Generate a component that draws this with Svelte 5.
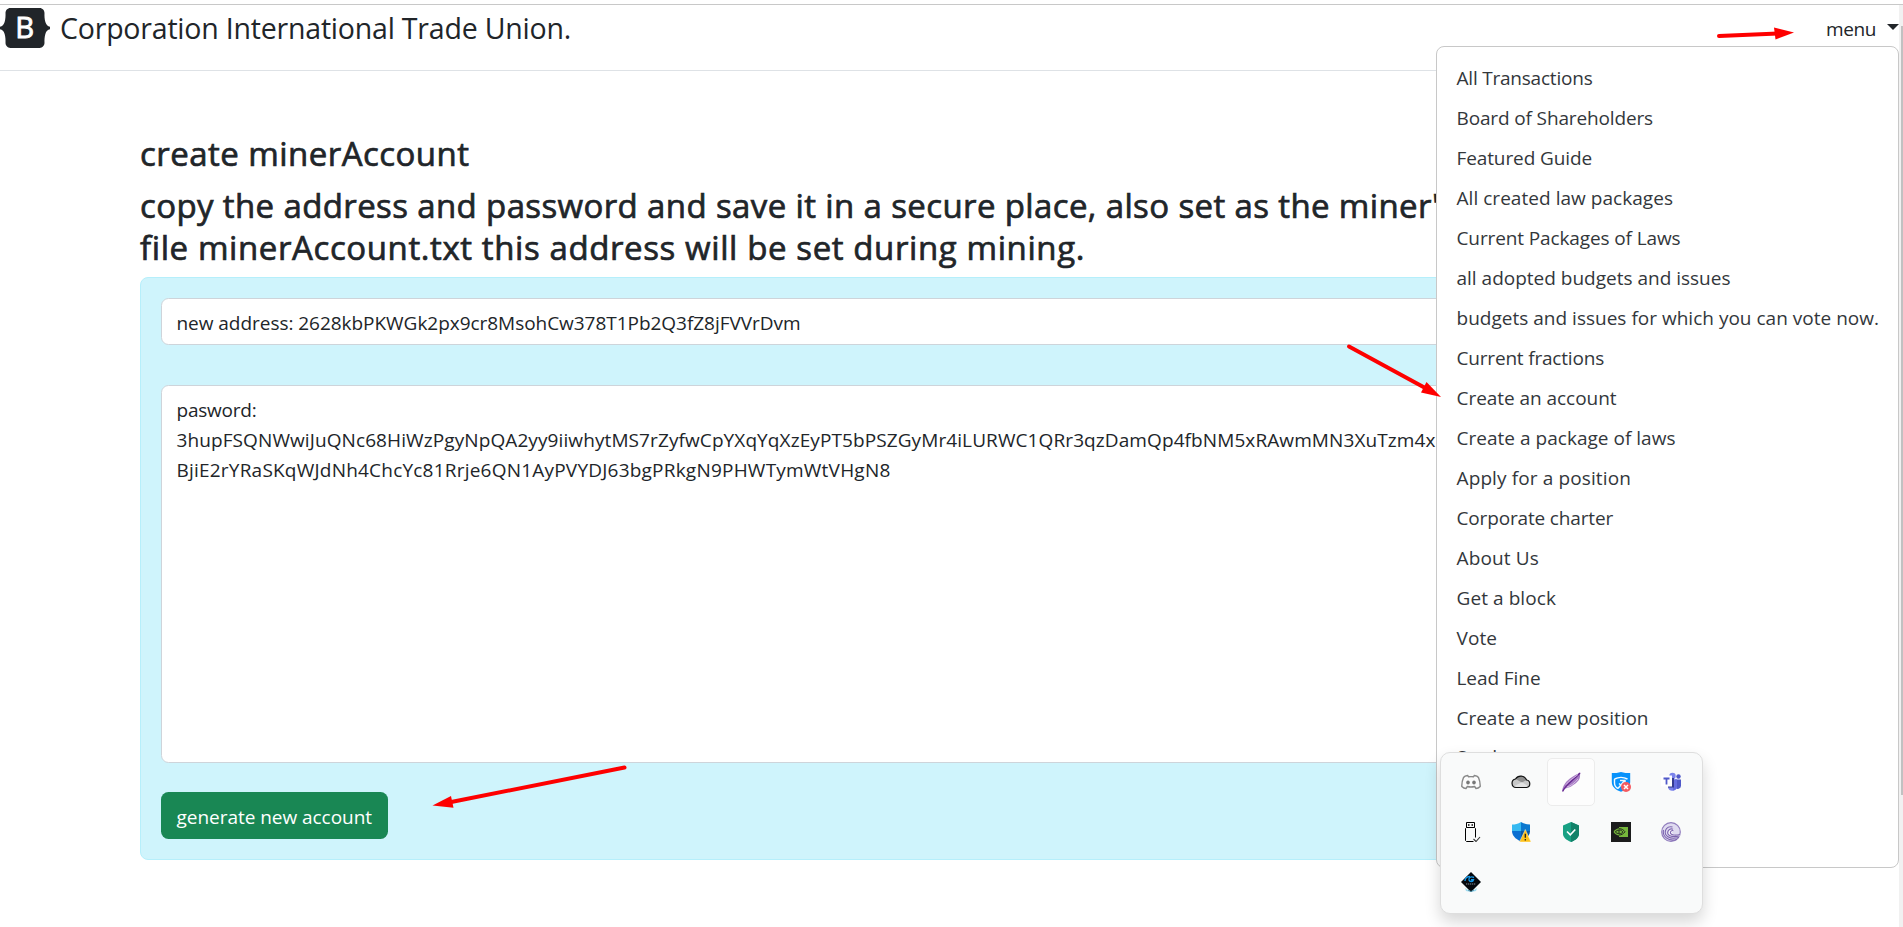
<script>
  // Spreads the letters of a line so that it takes the given width.
  function measure(node, width) {
    const natural = node.getBoundingClientRect().width;
    const count = node.textContent.length;
    node.style.letterSpacing = `${(width - natural) / count}px`;
  }

  const items = [
    ['All Transactions', 136],
    ['Board of Shareholders', 196.5],
    ['Featured Guide', 135.5],
    ['All created law packages', 216.5],
    ['Current Packages of Laws', 224],
    ['all adopted budgets and issues', 274],
    ['budgets and issues for which you can vote now.', 422.5],
    ['Current fractions', 147.5],
    ['Create an account', 160],
    ['Create a package of laws', 219],
    ['Apply for a position', 174.5],
    ['Corporate charter', 156.5],
    ['About Us', 82.5],
    ['Get a block', 99.5],
    ['Vote', 40.5],
    ['Lead Fine', 84],
    ['Create a new position', 192],
    ['Send', 39.5]
  ];
</script>

<div class="screen">
  <header>
    <div class="brand">
      <svg class="logo" width="50" height="40" viewBox="0 0 118 94">
        <path fill="#212529" d="M24.509 0c-6.733 0-11.715 5.893-11.492 12.284.214 6.14-.064 14.092-2.066 20.577C8.943 39.365 5.547 43.485 0 44.014v5.972c5.547.529 8.943 4.649 10.951 11.153 2.002 6.485 2.28 14.437 2.066 20.577C12.794 88.106 17.776 94 24.51 94H93.5c6.733 0 11.714-5.893 11.491-12.284-.214-6.14.064-14.092 2.066-20.577 2.009-6.504 5.396-10.624 10.943-11.153v-5.972c-5.547-.529-8.934-4.649-10.943-11.153-2.002-6.484-2.28-14.437-2.066-20.577C105.214 5.894 100.233 0 93.5 0H24.508z" />
        <text x="36" y="71">B</text>
      </svg>
      <span class="fit title" use:measure={511}>Corporation International Trade Union.</span>
    </div>
    <div class="toggle"><span class="fit" use:measure={50}>menu</span><i class="caret"></i></div>
  </header>

  <main>
    <h3><span class="fit" use:measure={329.5}>create minerAccount</span></h3>
    <h3>
      <span class="fit" use:measure={1299.5}>copy the address and password and save it in a secure place, also set as the miner'</span><br />
      <span class="fit" use:measure={945}>file minerAccount.txt this address will be set during mining.</span>
    </h3>
    <section class="panel">
      <div class="field"><span class="fit" use:measure={624}>new address: 2628kbPKWGk2px9cr8MsohCw378T1Pb2Q3fZ8jFVVrDvm</span></div>
      <div class="field area">
        <span class="fit" use:measure={80}>pasword:</span><br />
        <span class="fit" use:measure={1259}>3hupFSQNWwiJuQNc68HiWzPgyNpQA2yy9iiwhytMS7rZyfwCpYXqYqXzEyPT5bPSZGyMr4iLURWC1QRr3qzDamQp4fbNM5xRAwmMN3XuTzm4x</span><br />
        <span class="fit" use:measure={714}>BjiE2rYRaSKqWJdNh4ChcYc81Rrje6QN1AyPVYDJ63bgPRkgN9PHWTymWtVHgN8</span>
      </div>
      <button><span class="fit" use:measure={195.5}>generate new account</span></button>
    </section>
  </main>

  <div class="scrollbar"><div class="thumb"></div></div>

  <nav class="dropdown">
    {#each items as [label, width]}
      <a><span class="fit" use:measure={width}>{label}</span></a>
    {/each}
  </nav>

  <svg class="arrows" width="1903" height="927" viewBox="0 0 1903 927">
    <g stroke="#fe0000" stroke-width="4" stroke-linecap="round" fill="#fe0000">
      <path d="M1719 36 1778 33.500" /><path stroke="none" d="M1794 32.500 1774 27.500 1775.500 39.500Z" />
      <path d="M1349 346.500 1428 389.500" /><path stroke="none" d="M1441 397 1426.500 382 1421 392.500Z" />
      <path d="M624.500 767.500 450 802.300" /><path stroke="none" d="M432.500 805.500 451 796 453.500 807.700Z" />
    </g>
  </svg>

  <aside class="tray">
    <div class="cell">
      <svg width="20" height="20" viewBox="0 0 20 20">
        <path d="M6.700 3.500C4.500 3.800 3.100 4.700 2.500 5.500 1.300 8.300.7 11.500.8 14.500c1.300 1.300 3 2 4.200 2l1.300-2c2.500.7 4.900.7 7.400 0l1.300 2c1.200 0 2.900-.7 4.200-2 .1-3-.5-6.200-1.700-9-.6-.8-2-1.700-4.200-2l-.8 1.300c-1.700-.3-3.300-.3-5 0z" fill="#fbfbfb" stroke="#888" stroke-width="1.400" />
        <ellipse cx="7" cy="10.500" rx="1.800" ry="2" fill="#777" /><ellipse cx="13" cy="10.500" rx="1.800" ry="2" fill="#777" />
      </svg>
    </div>
    <div class="cell">
      <svg width="20" height="20" viewBox="0 0 20 20">
        <path d="M5 15.500a4.300 4.300 0 0 1-.5-8.500A6.300 6.300 0 0 1 15.600 8a3.800 3.800 0 0 1 0 7.500z" fill="#c8c8c8" />
        <path d="M4.500 7A6.300 6.300 0 0 1 15.600 8L11 10.500z" fill="#8e8e8e" />
        <path d="M2.300 14.500 11 10.300l6.800 4.200-2 1H5z" fill="#e2e2e2" />
        <path d="M5 15.500a4.300 4.300 0 0 1-.5-8.500A6.300 6.300 0 0 1 15.600 8a3.800 3.800 0 0 1 0 7.500z" fill="none" stroke="#111" stroke-width="1.200" />
      </svg>
    </div>
    <div class="cell active">
      <svg width="20" height="20" viewBox="0 0 20 20">
        <path d="M19.300.4C18.800 3 19.800 6 17 9c-2 2.200-3.300 3.200-6.500 5.200-2.500 1.400-5.500 1.800-7.500 3.100L1.600 19.500C.7 17.700 2 14.200 4 11.400 8 6 13 3.600 19.300.4z" fill="#a77cc4" />
        <path d="M1.600 19.500C5 12 12 9 19 1" fill="none" stroke="#662891" stroke-width="1.300" />
        <path d="M5 12.500C9 7.500 13 6 17 2.500M6 15c4-1 7.500-4 11-8" fill="none" stroke="#ddc7e9" stroke-width=".8" />
      </svg>
    </div>
    <div class="cell">
      <svg width="20" height="20" viewBox="0 0 20 20">
        <path d="M10 0c3 1 6 1 9.200 1v9c0 5-4 8-9.200 9.800C4.800 18 .8 15 .8 10V1C4 1 7 1 10 0z" fill="#0792fb" />
        <path d="M3.500 7c4-2 9-2 13 0M3.500 7v4c0 2.500 1.500 4.500 3.500 5.500" fill="none" stroke="#f2faff" stroke-width="1.400" />
        <path d="M7 16.500 14 8M9 8.500h5v4.500M8 11.500l3 2.500" fill="none" stroke="#e9f8ff" stroke-width="1.500" />
        <circle cx="15" cy="15" r="5" fill="#f45b61" />
        <path d="m13 13 4 4m0-4-4 4" stroke="#fff" stroke-width="1.500" />
      </svg>
    </div>
    <div class="cell">
      <svg width="20" height="20" viewBox="0 0 20 20">
        <circle cx="11.500" cy="4" r="3.200" fill="#7b83eb" /><circle cx="17.500" cy="4.500" r="2.200" fill="#5059c9" />
        <path d="M14 7.500h6v6.200a3.300 3.300 0 0 1-6 1.800z" fill="#5059c9" />
        <path d="M7 7.500h9v7a4.600 4.600 0 0 1-9 1z" fill="#7b83eb" /><path d="M12 7.500h4v7a4.600 4.600 0 0 1-4 4z" fill="#656de0" />
        <path d="M8 6h5v9.500H7z" fill="#353b91" /><path d="M0 3.500h11v11H0z" fill="#fff" />
        <path d="M2.500 6.500h6M5.500 6.500v6" stroke="#5059c9" stroke-width="1.800" />
      </svg>
    </div>
    <div class="cell">
      <svg width="20" height="20" viewBox="0 0 20 20" fill="none" stroke="#000">
        <path d="M5.500 5.500v-5h8v5" /><path d="M4.500 18.500v-12l1-1h8l1 1v9M4.500 18.500l1 1h7" />
        <path d="M7 3h1.500M10.500 3H12" stroke-width="1.300" /><path d="m12.500 17 2.500 2.500 4-4.500" stroke="#333" stroke-width="1.100" />
      </svg>
    </div>
    <div class="cell">
      <svg width="20" height="20" viewBox="0 0 20 20">
        <path d="M10 0C7 2 4 2.500 1 2.500V9h9z" fill="#36b9f1" /><path d="M10 0c3 2 6 2.500 9 2.500V9h-9z" fill="#0b78cf" />
        <path d="M1 9h9v10.500C4 17 1 13 1 9z" fill="#0a6fd1" /><path d="M10 9h9c0 4-3 8-9 10.500z" fill="#0b57a5" />
        <path d="M14.300 7.500 8.500 20H20z" fill="#ffc21a" stroke="#fff3ce" stroke-width=".5" />
        <path d="M14.300 11.800v4M14.300 17v1.600" stroke="#222" stroke-width="1.300" />
      </svg>
    </div>
    <div class="cell">
      <svg width="20" height="20" viewBox="0 0 20 20">
        <path d="m10 0 8 3.500V12c0 3-3 6-8 8-5-2-8-5-8-8V3.500z" fill="#18a083" /><path d="m10 0 8 3.500V12c0 3-3 6-8 8z" fill="#138269" />
        <path d="m6 9.500 3.300 3.300 5-5.300" fill="none" stroke="#fff" stroke-width="1.600" />
      </svg>
    </div>
    <div class="cell">
      <svg width="20" height="20" viewBox="0 0 20 20">
        <path d="M0 0h20v20H0z" fill="#1c1c1c" /><path d="M8 5h9v10H8z" fill="#76b73b" />
        <path d="M2.500 10C4 7.500 6 6.300 8.500 6.300c2.800 0 4.500 1.500 6 3.500-1.700 2.500-3.500 3.800-6 3.800-2.700 0-4.500-1.400-6-3.600z" fill="#76b73b" />
        <path d="M8 6.700c3 0 4.700 1.300 6 3.100-1.600 2-3.400 3.200-6 3.200M4.300 10c1-1.300 2.300-2 4-2 1.700 0 2.800.9 3.700 2-1 1.100-2 1.700-3.500 1.700C6.600 11.700 5.300 11 4.300 10zM8 8v3.500" fill="none" stroke="#1c1c1c" stroke-width=".9" />
      </svg>
    </div>
    <div class="cell">
      <svg width="20" height="20" viewBox="0 0 20 20">
        <circle cx="10" cy="10" r="9.300" fill="#dfdaf0" stroke="#917dbd" stroke-width="1.200" />
        <path d="M18.500 15C9 17 6 13.500 7.500 9.500c1-2.500 4.500-3 6-.5-3.500-.5-4.500 4.500 5.500 3.500" fill="#f7f5fc" />
        <path d="M18 15.500C8 18 3 13.500 4.500 8.500c1-3 4-4.500 7-3.500M18.500 14C10 16 5.500 13 7 9.300c.8-2 2.700-3 5-2M19 12.500c-6 1.500-10.500 0-9.500-2.500.4-1 1.500-1.800 3-1.300M16 17.500C7 20 1 14 2.500 8" fill="none" stroke="#7c64ae" stroke-width="1.100" />
      </svg>
    </div>
    <div class="cell">
      <svg width="20" height="20" viewBox="0 0 20 20">
        <path d="m4 16 6 4 6-4-1 3-5 1-5-1z" fill="#9fdbef" />
        <path d="M10 0 20 10 10 20 0 10z" fill="#05080d" />
        <path d="M4 9c0-3 2.500-4.500 5-4.500M13 5.500C10 4 7.500 5.500 8 8c.7 2 4 2 4.500-.2H10" fill="none" stroke="#1397e8" stroke-width="1.400" />
        <path d="M5 12h10" stroke="#59616a" stroke-width="1.400" stroke-dasharray="1.300 .7" /><path d="m7 18 3 1.500 3-1.500" stroke="#4a8da8" fill="none" />
      </svg>
    </div>
  </aside>
</div>

<style>
  :global(body) { margin: 0; background: #fff; overflow: hidden; }
  .screen {
    position: relative; box-sizing: border-box; width: 1903px; height: 927px; overflow: hidden;
    padding-top: 4px; background: #fff; color: #212529;
    font: 400 19px/30px 'Open Sans', 'Noto Sans', sans-serif;
  }
  .fit { display: inline-block; white-space: pre; }
  header {
    box-sizing: border-box; height: 67px; display: flex; justify-content: space-between; align-items: flex-start;
    border-top: 1px solid #c8c8c8; border-bottom: 1px solid #dee2e6; padding: 3px 4px 0 0;
  }
  .brand { display: flex; align-items: center; gap: 10px; height: 40px; }
  .logo text { font: 400 69px 'Open Sans', sans-serif; fill: #fff; stroke: #fff; stroke-width: 2px; }
  .title { font-size: 28.500px; line-height: 40px; }
  .toggle { display: flex; align-items: flex-start; padding-top: 6px; }
  .toggle .fit { margin-right: 11px; }
  .caret { margin-top: 10px; border: 6px solid transparent; border-top-color: #212529; border-bottom: 0; }
  main { padding: 62px 141px 0 140px; }
  h3 {
    margin: 0 0 10px; font-size: 33px; line-height: 42px; font-weight: 400; white-space: nowrap;
    -webkit-text-stroke: .7px #212529;
  }
  h3 + h3 { margin-bottom: 8px; }
  .panel {
    box-sizing: border-box; height: 583px; padding: 20px; background: #cff4fc; border: 1px solid #b6effb; border-radius: 8px;
    display: flex; flex-direction: column; align-items: flex-start;
  }
  .field {
    box-sizing: border-box; width: 100%; height: 47px; padding: 9px 15px 0 14.500px; background: #fff;
    border: 1px solid #ced4da; border-radius: 7.500px; white-space: nowrap; overflow: hidden;
  }
  .area { height: 378px; margin-top: 40px; }
  button {
    width: 227px; height: 47px; margin-top: 29px; padding: 3px 0 0 15.500px; border: 0; border-radius: 7.500px; text-align: left;
    background: #198754; color: #fff; font: inherit;
  }
  .scrollbar { position: absolute; top: 5px; right: 0; width: 4px; height: 922px; background: #f1f1f1; }
  .thumb { width: 2px; height: 769px; margin: 21px 0 0 2px; background: #c1c1c1; }
  .dropdown {
    position: absolute; left: 1436px; top: 46px; width: 463px; height: 822px; box-sizing: border-box; padding: 11px 19px 11px 19.500px;
    background: #fff; border: 1px solid #c8c8c8; border-radius: 8px; color: #33373b;
  }
  .dropdown a { display: block; height: 40px; line-height: 40px; }
  .dropdown a:last-child { line-height: 38px; }
  .arrows { position: absolute; left: 0; top: 0; }
  .tray {
    position: absolute; left: 1440px; top: 752px; width: 263px; height: 162px; box-sizing: border-box; padding: 4px 5px;
    background: #f9fafa; border: 1px solid #dedede; border-radius: 10px; box-shadow: 0 8px 16px rgba(0, 0, 0, .16);
    display: grid; grid-template-columns: repeat(5, 50px); grid-template-rows: repeat(3, 50px);
  }
  .cell { display: grid; place-items: center; box-sizing: border-box; margin: 1px; border-radius: 5px; }
  .active { background: #fdfdfd; border: 1px solid #ececec; }
  .cell svg { display: block; }
</style>
